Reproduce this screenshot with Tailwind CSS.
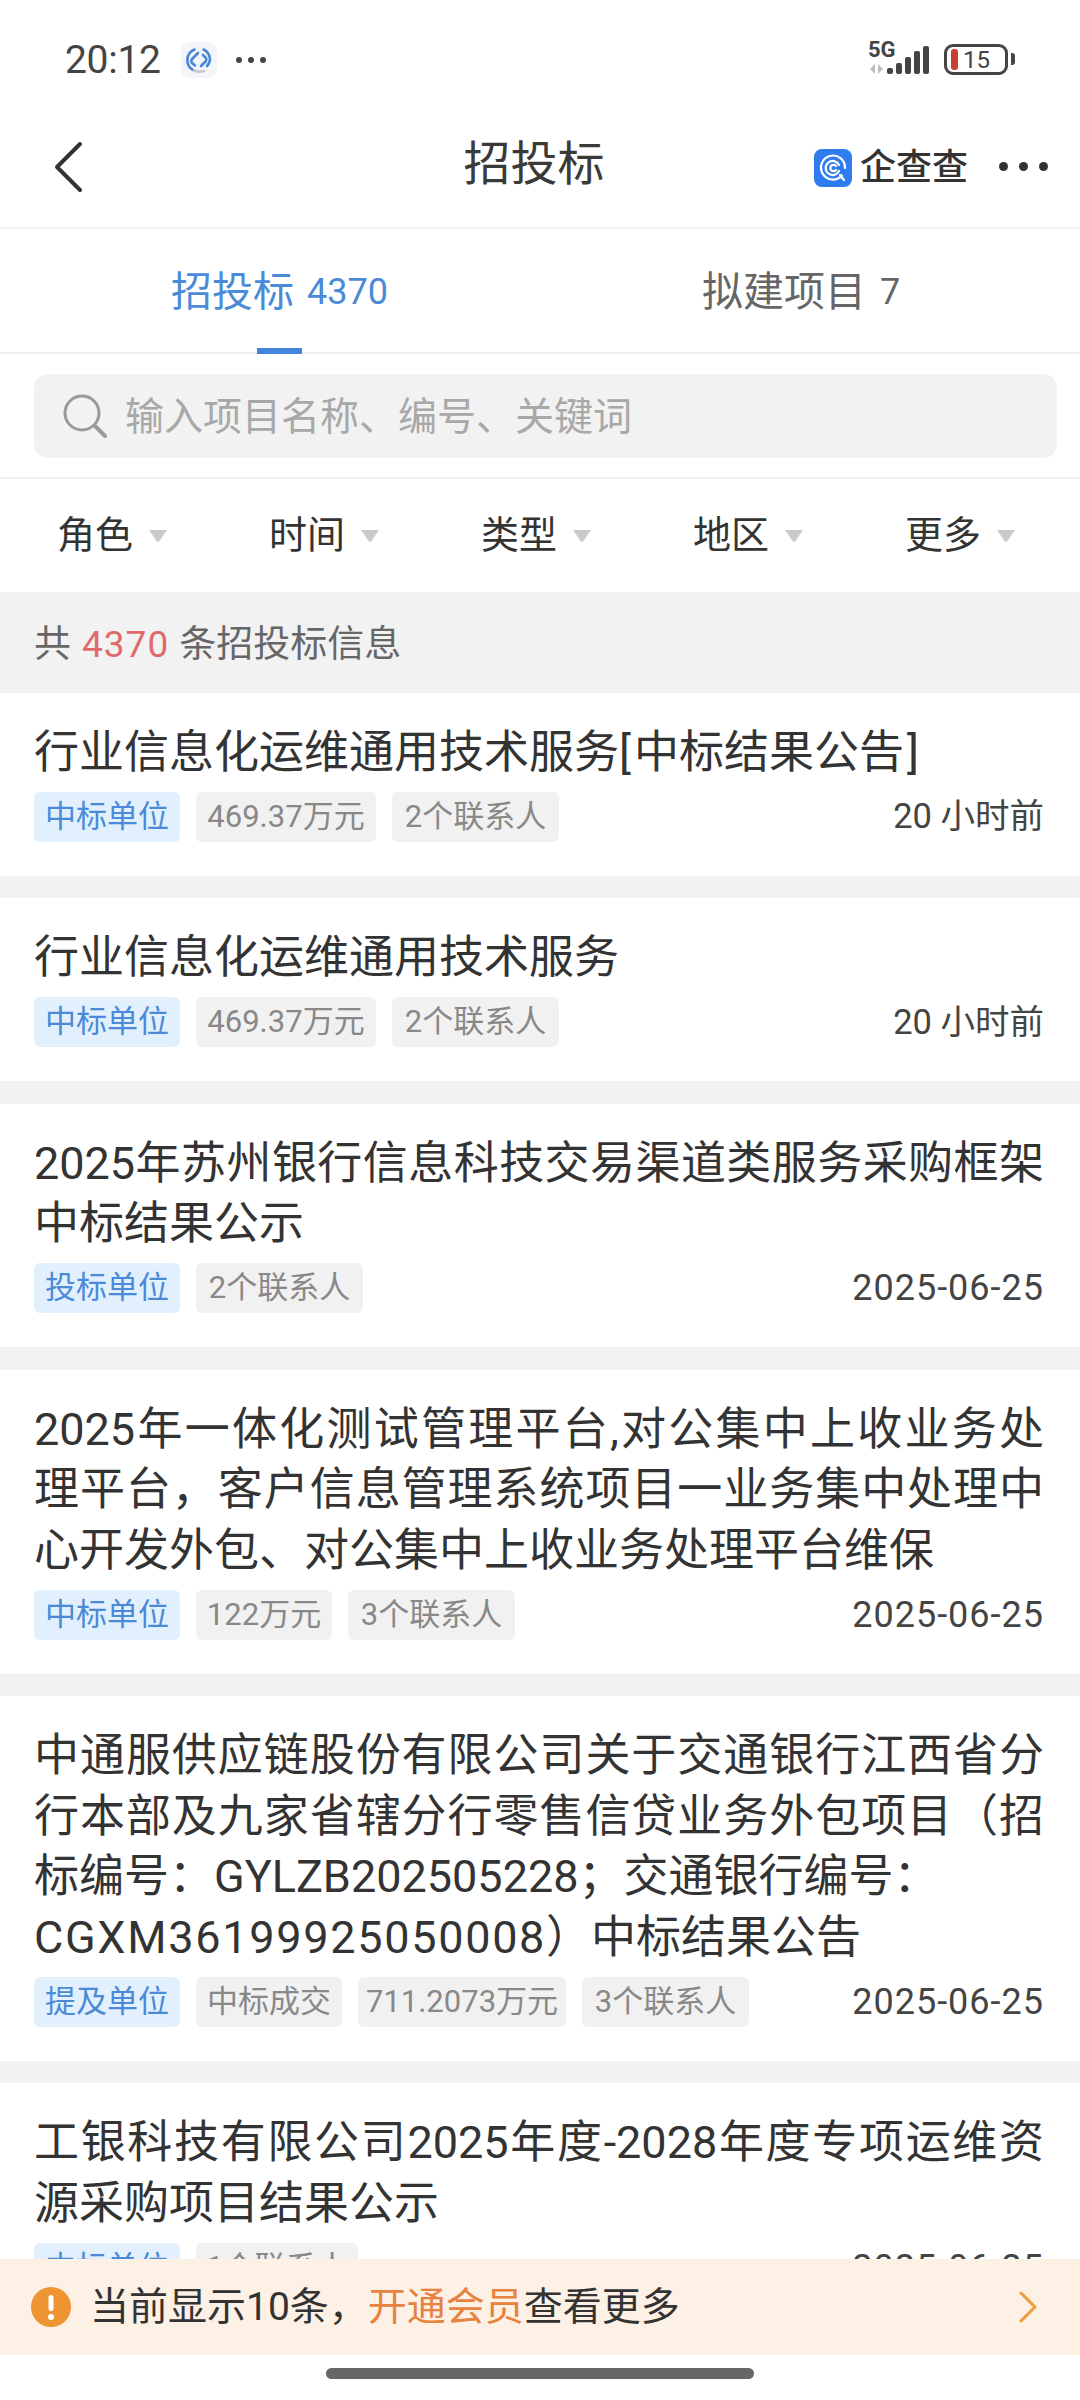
<!DOCTYPE html>
<html lang="zh">
<head>
<meta charset="utf-8">
<script src="https://cdn.jsdelivr.net/npm/@tailwindcss/browser@4"></script>
</head>
<body class="bg-white">
<div class="relative w-[1080px] h-[2400px] overflow-hidden bg-white text-[#333] font-[Roboto,'Noto_Sans_CJK_SC',sans-serif]">

  <!-- status bar -->
  <div class="h-[115px] flex items-start pt-[40px] pl-[65px] pr-[65px]">
    <span class="text-[39px] leading-[40px] text-[#444] font-[450] tracking-[-0.3px]">20:12</span>
    <div class="ml-[20px] mt-[2px] w-[36px] h-[36px] rounded-[9px] bg-[#f3f5fa] flex items-center justify-center">
      <svg width="30" height="30" viewBox="0 0 30 30" fill="none" stroke="#4a86d8" stroke-width="2.600" stroke-linecap="round" stroke-linejoin="round">
        <path d="M10.500 4.500 A11.500 11.500 0 0 0 9 25"/>
        <path d="M19.500 4.500 A11.500 11.500 0 0 1 26 14 Q26 18 23 21"/>
        <path d="M14 8 L8 14 Q6.500 16 8 18 L11 20.500"/>
        <path d="M17 21 L22 16 Q23 14.500 22 13 L19 10"/>
        <path d="M10 25.500 Q15 27.500 20 26" stroke="#c9c9c9"/>
      </svg>
    </div>
    <div class="ml-[19px] mt-[17px] flex gap-[6px]">
      <span class="w-[6px] h-[6px] rounded-full bg-[#444]"></span>
      <span class="w-[6px] h-[6px] rounded-full bg-[#444]"></span>
      <span class="w-[6px] h-[6px] rounded-full bg-[#444]"></span>
    </div>
    <div class="ml-auto flex items-start">
      <div class="relative w-[64px] h-[36px]">
        <svg class="absolute left-0 top-0" width="64" height="36" viewBox="0 0 64 36">
          <g fill="#bdbdbd"><path d="M7 24v10l-5-5z"/><path d="M10 24v10l5-5z"/></g>
          <g fill="#444">
            <rect x="19" y="28" width="6" height="6" rx="2"/>
            <rect x="28" y="23" width="6" height="11" rx="2"/>
            <rect x="37" y="17" width="6" height="17" rx="2"/>
            <rect x="46" y="11" width="6" height="23" rx="2"/>
            <rect x="55" y="6" width="6" height="28" rx="2"/>
          </g>
        </svg>
        <span class="absolute left-0 top-0 text-[22px] leading-[20px] font-bold text-[#444]">5G</span>
      </div>
      <div class="ml-[12px] mt-[4px] w-[64px] h-[31px] rounded-[9px] border-[3px] border-[#444] flex items-center pl-[4px]">
        <span class="w-[7px] h-[21px] rounded-[3px] bg-[#c9402f]"></span>
        <span class="ml-[5px] text-[24px] leading-[24px] text-[#444]">15</span>
      </div>
      <span class="ml-[3px] mt-[13px] w-[4px] h-[12px] rounded-r-[3px] bg-[#444]"></span>
    </div>
  </div>

  <!-- nav -->
  <div class="relative h-[114px] border-b-2 border-[#f0f0f0] flex items-center justify-center pb-[14px] pr-[12px]">
    <svg class="absolute left-[52px] top-[26px]" width="32" height="52" viewBox="0 0 32 52" fill="none" stroke="#333" stroke-width="4" stroke-linecap="round" stroke-linejoin="round"><path d="M28 3 L5 26 L28 49"/></svg>
    <span class="text-[47px] leading-[60px] text-[#3a3a3a]">招投标</span>
    <div class="absolute left-[814px] top-[33px] flex items-center">
      <div class="w-[38px] h-[38px] rounded-[8px] bg-[#2f7cf0] flex items-center justify-center">
        <svg width="30" height="30" viewBox="0 0 30 30" fill="none" stroke="#fff" stroke-width="2.200" stroke-linecap="round">
          <path d="M24 22.500A12 12 0 1 1 27 15"/>
          <path d="M21 12A7 7 0 1 0 21 18"/>
          <path d="M18 13A3.200 3.200 0 1 0 18 17"/>
          <path d="M22 22l4 5"/>
        </svg>
      </div>
      <span class="ml-[8px] text-[36px] leading-[40px] font-medium text-[#333]">企查查</span>
    </div>
    <div class="absolute left-[999px] top-[47px] flex gap-[11px]">
      <span class="w-[9px] h-[9px] rounded-full bg-[#333]"></span>
      <span class="w-[9px] h-[9px] rounded-full bg-[#333]"></span>
      <span class="w-[9px] h-[9px] rounded-full bg-[#333]"></span>
    </div>
  </div>

  <!-- tabs -->
  <div class="relative h-[125px] border-b-2 border-[#f0f0f0] flex">
    <div class="w-[386px] ml-[171px] pt-[38px] text-[#4a8ad8] flex items-center h-[51px] box-content">
      <span class="text-[41px] leading-[51px]">招投标</span>
      <span class="ml-[13px] text-[36px] leading-[51px]">4370</span>
    </div>
    <div class="pl-[145px] pt-[38px] text-[#666] flex items-center h-[51px] box-content">
      <span class="text-[41px] leading-[51px]">拟建项目</span>
      <span class="ml-[14px] text-[36px] leading-[51px]">7</span>
    </div>
    <span class="absolute left-[257px] bottom-[-2px] w-[45px] h-[6px] bg-[#3f86dc]"></span>
  </div>

  <!-- search -->
  <div class="h-[125px] border-b-2 border-[#f0f0f0] px-[34px] pt-[20px]">
    <div class="h-[84px] w-[1023px] rounded-[14px] bg-[#f2f2f2] flex items-center pl-[29px]">
      <svg width="44" height="44" viewBox="0 0 44 44" fill="none" stroke="#9a9a9a" stroke-width="3" stroke-linecap="round"><circle cx="19" cy="19" r="17"/><path d="M32 32 L42 42" stroke-width="4"/></svg>
      <span class="ml-[18px] mt-[2px] text-[39px] leading-[50px] text-[#a8a8a8]">输入项目名称、编号、关键词</span>
    </div>
  </div>

  <!-- filters -->
  <div class="h-[113px] flex items-center justify-between pl-[57px] pr-[64px] text-[38px] text-[#333]">
    <div class="flex items-center"><span>角色</span><svg class="ml-[15px]" width="20" height="12" viewBox="0 0 20 12"><path d="M1 0H19L11.500 11Q10 12.500 8.500 11Z" fill="#c9c9c9"/></svg></div>
    <div class="flex items-center"><span>时间</span><svg class="ml-[15px]" width="20" height="12" viewBox="0 0 20 12"><path d="M1 0H19L11.500 11Q10 12.500 8.500 11Z" fill="#c9c9c9"/></svg></div>
    <div class="flex items-center"><span>类型</span><svg class="ml-[15px]" width="20" height="12" viewBox="0 0 20 12"><path d="M1 0H19L11.500 11Q10 12.500 8.500 11Z" fill="#c9c9c9"/></svg></div>
    <div class="flex items-center"><span>地区</span><svg class="ml-[15px]" width="20" height="12" viewBox="0 0 20 12"><path d="M1 0H19L11.500 11Q10 12.500 8.500 11Z" fill="#c9c9c9"/></svg></div>
    <div class="flex items-center"><span>更多</span><svg class="ml-[15px]" width="20" height="12" viewBox="0 0 20 12"><path d="M1 0H19L11.500 11Q10 12.500 8.500 11Z" fill="#c9c9c9"/></svg></div>
  </div>

  <!-- count band -->
  <div class="h-[101px] bg-[#f2f2f2] flex items-center pl-[34px] pt-[5px] text-[37px] text-[#666]">
    <span>共</span><span class="ml-[11px] text-[#e06a6a] tracking-[1px]">4370</span><span class="ml-[10px]">条招投标信息</span>
  </div>

  <!-- list -->
  <div class="flex flex-col gap-[22.900px] bg-[#f2f2f2]">
    <div class="bg-white pl-[34px] pr-[36px] pt-[30px] pb-[33.600px]">
      <div class="flex text-[45px] leading-[60.500px] text-[#333] whitespace-nowrap"><span>行业信息化运维通用技术服务</span><span class="pr-[3px]">[</span><span>中标结果公告</span><span class="pl-[3px]">]</span></div>
      <div class="mt-[8.500px] flex items-center gap-[16px] h-[50px] text-[31px]">
        <span class="h-[50px] w-[146px] rounded-[6px] bg-[#e2f0fd] text-[#4a8ad8] flex items-center justify-center">中标单位</span>
        <span class="h-[50px] w-[180px] rounded-[6px] bg-[#f1f1f1] text-[#888] flex items-center justify-center">469.37万元</span>
        <span class="h-[50px] w-[167px] rounded-[6px] bg-[#f1f1f1] text-[#888] flex items-center justify-center">2个联系人</span>
        <span class="ml-auto text-[34.500px] text-[#444]">20 小时前</span>
      </div>
    </div>
    <div class="bg-white pl-[34px] pr-[36px] pt-[30px] pb-[33.600px]">
      <div class="text-[45px] leading-[60.500px] text-[#333]">行业信息化运维通用技术服务</div>
      <div class="mt-[8.500px] flex items-center gap-[16px] h-[50px] text-[31px]">
        <span class="h-[50px] w-[146px] rounded-[6px] bg-[#e2f0fd] text-[#4a8ad8] flex items-center justify-center">中标单位</span>
        <span class="h-[50px] w-[180px] rounded-[6px] bg-[#f1f1f1] text-[#888] flex items-center justify-center">469.37万元</span>
        <span class="h-[50px] w-[167px] rounded-[6px] bg-[#f1f1f1] text-[#888] flex items-center justify-center">2个联系人</span>
        <span class="ml-auto text-[34.500px] text-[#444]">20 小时前</span>
      </div>
    </div>
    <div class="bg-white pl-[34px] pr-[36px] pt-[30px] pb-[33.600px]">
      <div class="text-[45px] leading-[60.500px] text-[#333]">
        <div class="[text-align-last:justify]">2025年苏州银行信息科技交易渠道类服务采购框架</div>
        <div>中标结果公示</div>
      </div>
      <div class="mt-[8.500px] flex items-center gap-[16px] h-[50px] text-[31px]">
        <span class="h-[50px] w-[146px] rounded-[6px] bg-[#e2f0fd] text-[#4a8ad8] flex items-center justify-center">投标单位</span>
        <span class="h-[50px] w-[167px] rounded-[6px] bg-[#f1f1f1] text-[#888] flex items-center justify-center">2个联系人</span>
        <span class="ml-auto text-[36px] tracking-[1px] text-[#444]">2025-06-25</span>
      </div>
    </div>
    <div class="bg-white pl-[34px] pr-[36px] pt-[30px] pb-[33.600px]">
      <div class="text-[45px] leading-[60.500px] text-[#333]">
        <div class="[text-align-last:justify]">2025年一体化测试管理平台,对公集中上收业务处</div>
        <div class="[text-align-last:justify]">理平台，客户信息管理系统项目一业务集中处理中</div>
        <div>心开发外包、对公集中上收业务处理平台维保</div>
      </div>
      <div class="mt-[8.500px] flex items-center gap-[16px] h-[50px] text-[31px]">
        <span class="h-[50px] w-[146px] rounded-[6px] bg-[#e2f0fd] text-[#4a8ad8] flex items-center justify-center">中标单位</span>
        <span class="h-[50px] w-[136px] rounded-[6px] bg-[#f1f1f1] text-[#888] flex items-center justify-center">122万元</span>
        <span class="h-[50px] w-[167px] rounded-[6px] bg-[#f1f1f1] text-[#888] flex items-center justify-center">3个联系人</span>
        <span class="ml-auto text-[36px] tracking-[1px] text-[#444]">2025-06-25</span>
      </div>
    </div>
    <div class="bg-white pl-[34px] pr-[36px] pt-[30px] pb-[33.600px]">
      <div class="text-[45px] leading-[60.500px] text-[#333]">
        <div class="[text-align-last:justify]">中通服供应链股份有限公司关于交通银行江西省分</div>
        <div class="[text-align-last:justify]">行本部及九家省辖分行零售信贷业务外包项目（招</div>
        <div>标编号：GYLZB202505228；交通银行编号：</div>
        <div class="flex"><span class="tracking-[1.700px]">CGXM36199925050008</span><span>）中标结果公告</span></div>
      </div>
      <div class="mt-[8.500px] flex items-center gap-[16px] h-[50px] text-[31px]">
        <span class="h-[50px] w-[146px] rounded-[6px] bg-[#e2f0fd] text-[#4a8ad8] flex items-center justify-center">提及单位</span>
        <span class="h-[50px] w-[146px] rounded-[6px] bg-[#f1f1f1] text-[#888] flex items-center justify-center">中标成交</span>
        <span class="h-[50px] w-[208px] rounded-[6px] bg-[#f1f1f1] text-[#888] flex items-center justify-center">711.2073万元</span>
        <span class="h-[50px] w-[167px] rounded-[6px] bg-[#f1f1f1] text-[#888] flex items-center justify-center">3个联系人</span>
        <span class="ml-auto text-[36px] tracking-[1px] text-[#444]">2025-06-25</span>
      </div>
    </div>
    <div class="bg-white pl-[34px] pr-[36px] pt-[30px] pb-[33.600px]">
      <div class="text-[45px] leading-[60.500px] text-[#333]">
        <div class="[text-align-last:justify]">工银科技有限公司2025年度-2028年度专项运维资</div>
        <div>源采购项目结果公示</div>
      </div>
      <div class="mt-[8.500px] flex items-center gap-[16px] h-[50px] text-[31px]">
        <span class="h-[50px] w-[146px] rounded-[6px] bg-[#e2f0fd] text-[#4a8ad8] flex items-center justify-center">中标单位</span>
        <span class="h-[50px] w-[162px] rounded-[6px] bg-[#f1f1f1] text-[#888] flex items-center justify-center">1个联系人</span>
        <span class="ml-auto text-[36px] tracking-[1px] text-[#444]">2025-06-25</span>
      </div>
    </div>
  </div>

  <!-- bottom overlay -->
  <div class="absolute left-0 right-0 bottom-0 h-[141px] bg-white">
    <div class="h-[96px] bg-[#fdf0e4] flex items-center pl-[31px] pr-[43px]">
      <svg width="40" height="40" viewBox="0 0 40 40"><circle cx="20" cy="20" r="20" fill="#ef9433"/><rect x="17.500" y="8" width="5" height="16" rx="2.500" fill="#fff"/><circle cx="20" cy="30" r="3" fill="#fff"/></svg>
      <div class="ml-[19px] flex text-[39px] leading-[50px] text-[#333] whitespace-nowrap"><span>当前显示10条，</span><span class="text-[#e8823f]">开通会员</span><span>查看更多</span></div>
      <svg class="ml-auto" width="18" height="32" viewBox="0 0 18 32" fill="none" stroke="#ef9a3c" stroke-width="3" stroke-linecap="round" stroke-linejoin="round"><path d="M2 2 L16 16 L2 30"/></svg>
    </div>
    <div class="mt-[13px] mx-auto w-[428px] h-[11px] rounded-full bg-[#666]"></div>
  </div>
</div>
</body>
</html>
